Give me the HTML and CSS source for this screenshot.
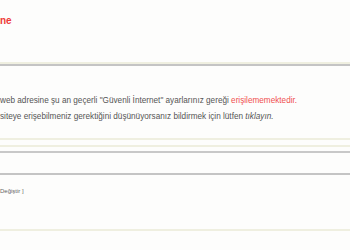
FILE: index.html
```html
<!DOCTYPE html>
<html lang="tr">
<head>
    <meta charset="UTF-8">
    <meta name="viewport" content="width=device-width, initial-scale=1.0">
    <title>Güvenli İnternet</title>
    <link rel="stylesheet" href="styles.css">
</head>
<body>

    <div class="header">
        <h1 class="title">ne</h1>
    </div>

    <div class="message">
        <p>web adresine şu an geçerli "Güvenli İnternet" ayarlarınız gereği <span class="blocked">erişilememektedir.</span></p>
        <p>siteye erişebilmeniz gerektiğini düşünüyorsanız bildirmek için lütfen <a href="#" class="report">tıklayın.</a></p>
    </div>

    <div class="band"></div>
    <div class="bar"></div>

    <div class="settings">
        <span class="change">Değiştir ]</span>
    </div>

</body>
</html>
```

FILE: styles.css
```css
body {
    margin: 0;
    background-color: #fdfdfc;
    font-family: "Liberation Sans", Arial, sans-serif;
    color: #555;
    overflow: hidden;
}

.header {
    height: 58px;
    border-bottom: 2px solid #efefe0;
    padding-bottom: 4px;
}

.title {
    margin: 0;
    padding-top: 15px;
    font-size: 10px;
    font-weight: bold;
    color: #ee3a3a;
}

.message {
    border-top: 2px solid #c4c4c4;
    padding: 31px 0 0 0;
    height: 41px;
    border-bottom: 2px solid #efefe0;
}

.message p {
    margin: 0 0 8px 0;
    font-size: 8.2px;
    line-height: 8px;
    white-space: nowrap;
}

.blocked {
    color: #f05050;
}

.report {
    color: #555;
    font-style: italic;
    text-decoration: none;
}

/* bandes de séparation sous le message */
.band {
    height: 5px;
    border-bottom: 2px solid #efefe0;
    margin-bottom: 4px;
}

.bar {
    height: 20px;
    border-top: 2px solid #c8c8c8;
}

.settings {
    border-top: 2px solid #c4c4c4;
    padding-top: 12px;
    height: 42px;
    border-bottom: 2px solid #efefe0;
    font-size: 6px;
    line-height: 8px;
}

.change {
    color: #666;
}
```
